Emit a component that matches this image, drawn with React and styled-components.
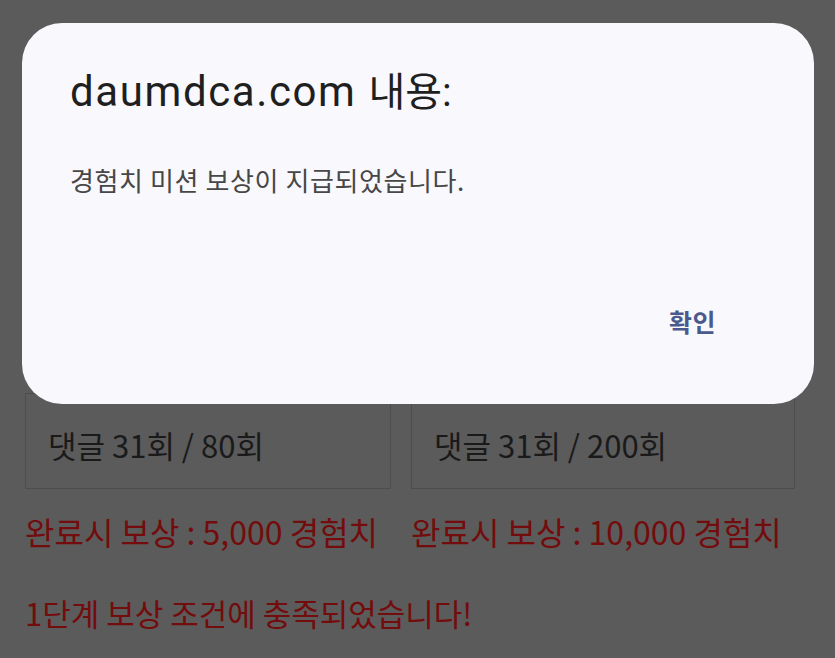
import styled, { createGlobalStyle } from 'styled-components';

const GlobalStyle = createGlobalStyle`
	html, body {
		margin: 0;
		padding: 0;
		background: #5b5b5b;
	}
	body {
		font-family: 'Noto Sans CJK KR', 'Noto Sans', sans-serif;
	}
`;

const missions = [
	{ current: 31, goal: 80, reward: '5,000' },
	{ current: 31, goal: 200, reward: '10,000' },
];

const App = () => {
	return (
		<>
			<GlobalStyle />
			<StyledPage>
				<StyledMissionGrid>
					{missions.map((m) => (
						<StyledMissionBox key={m.goal}>
							댓글 {m.current}회 / {m.goal}회
						</StyledMissionBox>
					))}
					{missions.map((m) => (
						<StyledReward key={m.goal}>완료시 보상 : {m.reward} 경험치</StyledReward>
					))}
				</StyledMissionGrid>
				<StyledNotice>1단계 보상 조건에 충족되었습니다!</StyledNotice>
			</StyledPage>

			{/* 브라우저 alert 다이얼로그 */}
			<StyledDialog role='alertdialog'>
				<StyledTitle>
					daumdca.com <StyledTitleKo>내용:</StyledTitleKo>
				</StyledTitle>
				<StyledMessage>경험치 미션 보상이 지급되었습니다.</StyledMessage>
				<StyledActions>
					<StyledConfirm>확인</StyledConfirm>
				</StyledActions>
			</StyledDialog>
		</>
	);
};

export default App;

const StyledPage = styled.main`
	height: 658px;
	box-sizing: border-box;
	padding: 393px 25px 0;
	overflow: hidden;
`;

const StyledMissionGrid = styled.div`
	display: grid;
	grid-template-columns: 366px 384px;
	column-gap: 20px;
`;

const StyledMissionBox = styled.div`
	border: 1px solid #4d4d4d;
	padding: 30px 22px 22px;
	font-size: 31px;
	line-height: 42px;
	color: #1a1a1a;
	white-space: nowrap;
`;

const StyledReward = styled.p`
	margin: 20px 0 0;
	font-size: 32px;
	line-height: 44px;
	color: #730c0c;
	white-space: nowrap;
`;

const StyledNotice = styled.p`
	margin: 38px 0 0;
	font-size: 31px;
	line-height: 44px;
	color: #730c0c;
	white-space: nowrap;
`;

const StyledDialog = styled.div`
	position: absolute;
	top: 23px;
	left: 22px;
	width: 792px;
	height: 381px;
	box-sizing: border-box;
	border-radius: 40px;
	background: #f8f8fd;
	padding: 43px 48px 0;
	display: flex;
	flex-direction: column;
`;

const StyledTitle = styled.h1`
	margin: 0;
	font-family: Roboto, 'Noto Sans CJK KR', sans-serif;
	font-weight: 400;
	font-size: 42px;
	line-height: 52px;
	letter-spacing: 1.6px;
	color: #1f1f1f;
`;

const StyledTitleKo = styled.span`
	letter-spacing: 0;
	font-size: 40px;
`;

const StyledMessage = styled.p`
	margin: 43px 0 0;
	font-size: 26px;
	line-height: 36px;
	letter-spacing: 0.6px;
	color: #474747;
`;

const StyledActions = styled.div`
	display: flex;
	justify-content: flex-end;
	margin-top: auto;
	padding: 0 50px 59px 0;
`;

const StyledConfirm = styled.button`
	border: none;
	background: none;
	padding: 8px 0;
	font-family: 'Noto Sans CJK KR', sans-serif;
	font-weight: 700;
	font-size: 25px;
	line-height: 32px;
	letter-spacing: 0.5px;
	color: #4a5a8c;
	cursor: pointer;
`;
